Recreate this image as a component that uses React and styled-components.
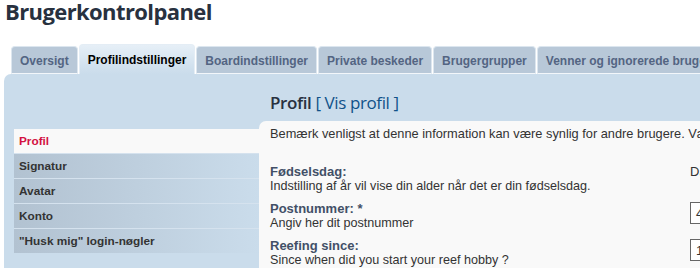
import React from 'react'
import styled, { createGlobalStyle } from 'styled-components'

const GlobalStyle = createGlobalStyle`
  html, body {
    margin: 0;
    padding: 0;
    background: #fff;
    overflow: hidden;
  }
  body {
    font-family: "Liberation Sans", Arial, sans-serif;
    color: #333;
  }
`

const tabs = [
  { name: 'Oversigt' },
  { name: 'Profilindstillinger', active: true },
  { name: 'Boardindstillinger' },
  { name: 'Private beskeder' },
  { name: 'Brugergrupper' },
  { name: 'Venner og ignorerede brugere' },
]

const menu = [
  { name: 'Profil', active: true },
  { name: 'Signatur' },
  { name: 'Avatar' },
  { name: 'Konto' },
  { name: '"Husk mig" login-nøgler' },
]

const fields = [
  { label: 'Fødselsdag:', desc: 'Indstilling af år vil vise din alder når det er din fødselsdag.', kind: 'select' },
  { label: 'Postnummer: *', desc: 'Angiv her dit postnummer', kind: 'input', value: '4' },
  { label: 'Reefing since:', desc: 'Since when did you start your reef hobby ?', kind: 'input', value: '1' },
]

const App = () => {
  return (
    <>
      <GlobalStyle />
      <Page>
        <Title>Brugerkontrolpanel</Title>
        <TabRow>
          {tabs.map((tab) => (
            <Tab key={tab.name} $active={tab.active}>
              {tab.name}
            </Tab>
          ))}
        </TabRow>
        <Panel>
          <SideNav>
            {menu.map((item) => (
              <NavItem key={item.name} $active={item.active}>
                {item.name}
              </NavItem>
            ))}
          </SideNav>
          <Main>
            <Heading>
              Profil <ViewLink>[ Vis profil ]</ViewLink>
            </Heading>
            <Content>
              <Notice>
                Bemærk venligst at denne information kan være synlig for andre brugere. Vær opmærksom på hvad du skriver.
              </Notice>
              <Fields>
                {fields.map((f) => (
                  <FieldRow key={f.label}>
                    <FieldText>
                      <Label>{f.label}</Label>
                      <Desc>{f.desc}</Desc>
                    </FieldText>
                    <FieldControl>
                      {f.kind === 'select' ? <SelectLabel>Dag:</SelectLabel> : <Input>{f.value}</Input>}
                    </FieldControl>
                  </FieldRow>
                ))}
              </Fields>
            </Content>
          </Main>
        </Panel>
      </Page>
    </>
  )
}

export default App

const Page = styled.div`
  width: 1000px;
  padding-left: 4px;
`

const Title = styled.h2`
  margin: 0;
  padding-left: 1px;
  height: 44px;
  font-family: "Open Sans", sans-serif;
  font-weight: 700;
  font-size: 22px;
  line-height: 22px;
  color: #28313f;
  letter-spacing: -0.6px;
`

const TabRow = styled.div`
  display: flex;
  align-items: flex-end;
  gap: 1px;
  padding-left: 7px;
  height: 30px;
`

const Tab = styled.div`
  box-sizing: border-box;
  height: ${(p) => (p.$active ? '30px' : '28px')};
  padding: 0 8px;
  display: flex;
  align-items: center;
  padding-top: ${(p) => (p.$active ? '0' : '1px')};
  font-size: 12px;
  font-weight: bold;
  white-space: nowrap;
  border-radius: 4px 4px 0 0;
  color: ${(p) => (p.$active ? '#000' : '#536482')};
  background: ${(p) => (p.$active ? 'linear-gradient(#e6eff7, #cadceb)' : '#b8c8d8')};
  border: 1px solid ${(p) => (p.$active ? '#e4edf5' : '#dce6ef')};
  border-bottom: ${(p) => (p.$active ? 'none' : '1px solid #f2f6fa')};
`

const Panel = styled.div`
  display: grid;
  grid-template-columns: 245px 1fr;
  background: #cadceb;
  border-radius: 7px 0 0 0;
  padding-left: 10px;
  height: 200px;
`

const SideNav = styled.div`
  padding-top: 55px;
  display: flex;
  flex-direction: column;
`

const NavItem = styled.div`
  box-sizing: border-box;
  height: 25px;
  padding-left: 5px;
  display: flex;
  align-items: center;
  font-size: 11.8px;
  font-weight: bold;
  color: ${(p) => (p.$active ? '#d31141' : '#333')};
  background: ${(p) => (p.$active ? '#f9f9f9' : 'linear-gradient(to right, #b2c2d1, #cadceb)')};
  border-top: 1px solid ${(p) => (p.$active ? '#f9f9f9' : '#d5e2ee')};
  &:first-child {
    border-top: none;
    height: 24px;
  }
`

const Main = styled.div`
  display: flex;
  flex-direction: column;
`

const Heading = styled.h3`
  margin: 0;
  height: 47px;
  padding: 17px 0 0 11px;
  box-sizing: border-box;
  font-family: "Open Sans", sans-serif;
  font-weight: 600;
  font-size: 17px;
  color: #28313f;
  letter-spacing: -0.4px;
`

const ViewLink = styled.span`
  font-weight: 400;
  color: #105289;
  letter-spacing: -0.4px;
`

const Content = styled.div`
  background: #f9f9f9;
  border-radius: 7px 0 0 0;
  padding: 5px 11px 0;
  flex: 1;
`

const Notice = styled.p`
  margin: 0;
  font-size: 12.8px;
  line-height: 16px;
  white-space: nowrap;
  color: #333;
`

const Fields = styled.div`
  display: flex;
  flex-direction: column;
  gap: 9px;
  margin-top: 23px;
`

const FieldRow = styled.div`
  display: grid;
  grid-template-columns: 420px 1fr;
`

const FieldText = styled.div`
  display: flex;
  flex-direction: column;
`

const Label = styled.div`
  font-size: 13px;
  line-height: 14px;
  font-weight: bold;
  color: #425067;
`

const Desc = styled.div`
  font-size: 12.6px;
  line-height: 14px;
  color: #333;
`

const FieldControl = styled.div`
  display: flex;
  align-items: flex-start;
`

const SelectLabel = styled.span`
  font-size: 13px;
  line-height: 14px;
  color: #333;
`

const Input = styled.div`
  box-sizing: border-box;
  width: 120px;
  height: 22px;
  padding: 3px 5px;
  font-size: 13px;
  border: 1px solid #666;
  background: #fff;
  color: #333;
`
